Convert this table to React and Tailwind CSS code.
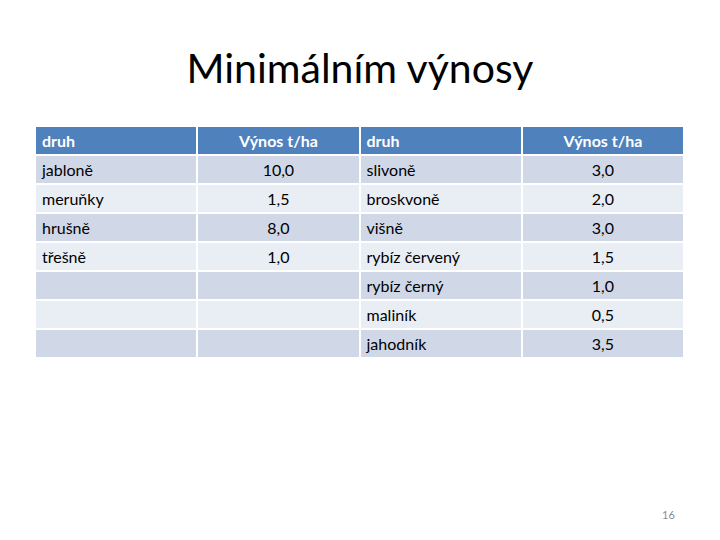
import React from "react";

const rows = [
  ["jabloně", "10,0", "slivoně", "3,0"],
  ["meruňky", "1,5", "broskvoně", "2,0"],
  ["hrušně", "8,0", "višně", "3,0"],
  ["třešně", "1,0", "rybíz červený", "1,5"],
  ["", "", "rybíz černý", "1,0"],
  ["", "", "maliník", "0,5"],
  ["", "", "jahodník", "3,5"],
];

export default function App() {
  return (
    <div
      className="w-[720px] h-[540px] bg-white relative overflow-hidden"
      style={{ fontFamily: "Lato, 'Open Sans', sans-serif" }}
    >
      <div className="pt-[42px] h-[127px] text-center text-[41px] leading-[52px] text-black">
        Minimálním výnosy
      </div>
      <div className="ml-[36px] w-[647px] grid grid-cols-4 gap-[2px] text-[16px]">
        <div className="h-[27px] bg-[#4f81bd] text-white font-bold flex items-center pl-[6px]">druh</div>
        <div className="h-[27px] bg-[#4f81bd] text-white font-bold flex items-center justify-center">Výnos t/ha</div>
        <div className="h-[27px] bg-[#4f81bd] text-white font-bold flex items-center pl-[6px]">druh</div>
        <div className="h-[27px] bg-[#4f81bd] text-white font-bold flex items-center justify-center">Výnos t/ha</div>
        {rows.map((r, i) => {
          const bg = i % 2 === 0 ? "bg-[#d0d8e8]" : "bg-[#e9edf4]";
          return (
            <React.Fragment key={i}>
              <div className={`h-[27px] ${bg} flex items-center pl-[6px] text-black`}>{r[0]}</div>
              <div className={`h-[27px] ${bg} flex items-center justify-center text-black`}>{r[1]}</div>
              <div className={`h-[27px] ${bg} flex items-center pl-[6px] text-black`}>{r[2]}</div>
              <div className={`h-[27px] ${bg} flex items-center justify-center text-black`}>{r[3]}</div>
            </React.Fragment>
          );
        })}
      </div>
      <div className="absolute left-[662px] top-[507px] text-[11px] text-[#8c8c8c]">16</div>
    </div>
  );
}
